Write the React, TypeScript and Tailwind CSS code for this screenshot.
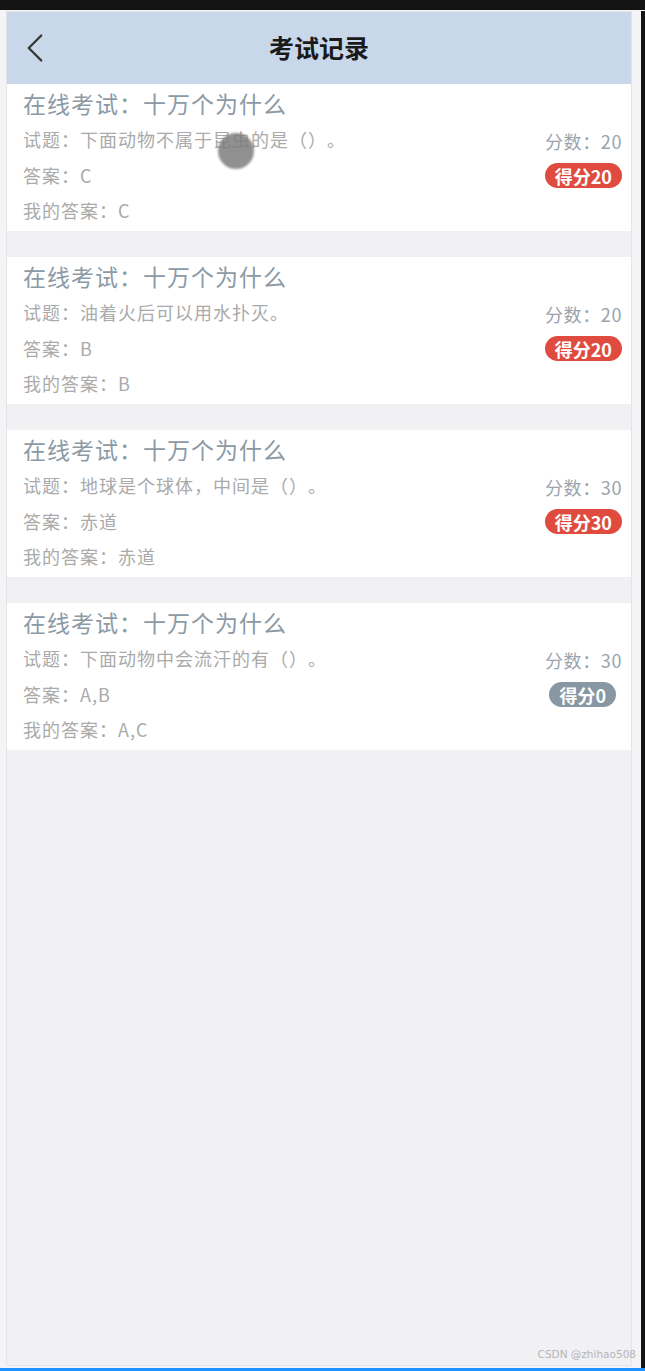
import { ChevronLeft } from 'lucide-react';

type Record = {
  question: string;
  answer: string;
  myAnswer: string;
  score: number;
  got: number;
};

const records: Record[] = [
  { question: '下面动物不属于昆虫的是（）。', answer: 'C', myAnswer: 'C', score: 20, got: 20 },
  { question: '油着火后可以用水扑灭。', answer: 'B', myAnswer: 'B', score: 20, got: 20 },
  { question: '地球是个球体，中间是（）。', answer: '赤道', myAnswer: '赤道', score: 30, got: 30 },
  { question: '下面动物中会流汗的有（）。', answer: 'A,B', myAnswer: 'A,C', score: 30, got: 0 },
];

const font = { fontFamily: '"Noto Sans CJK SC", "Noto Sans", sans-serif' };

function RecordCard({ item }: { item: Record }) {
  const badge = item.got > 0 ? 'bg-[#e04b40] px-[10px]' : 'bg-[#8797a3] px-[10px] mr-[6px]';
  return (
    <div className="bg-white h-[147px] pl-[16px] pr-[9px] pt-[4px] flex flex-col [text-spacing-trim:space-all]">
      <div className="text-[23px] leading-[30px] text-[#8c9aa6] tracking-[1px]">
        在线考试：十万个为什么
      </div>
      <div className="flex justify-between">
        <div className="flex flex-col text-[18px] text-[#aaaaaa] tracking-[1px]">
          <div className="h-[35px] leading-[35px] mt-[4px]">试题：{item.question}</div>
          <div className="h-[36px] leading-[36px]">答案：{item.answer}</div>
          <div className="h-[35px] leading-[35px]">我的答案：{item.myAnswer}</div>
        </div>
        <div className="flex flex-col items-end pt-[11px]">
          <div className="text-[18px] leading-[24px] text-[#9aa4ad] tracking-[0.6px]">分数：{item.score}</div>
          <div className={`mt-[10px] h-[25px] rounded-full flex items-center text-white font-bold text-[18px] leading-none ${badge}`}>
            得分{item.got}
          </div>
        </div>
      </div>
    </div>
  );
}

export default function App() {
  return (
    <div className="w-[645px] h-[1371px] bg-[#f4f4f6] flex flex-col overflow-hidden" style={font}>
      <div className="h-[10px] bg-[#141414] shrink-0" />
      <div className="flex flex-1 pt-[1px]">
        <div className="w-[6px] shrink-0" />
        <div className="w-[626px] border border-[#e4e4e6] bg-[#f1f0f3] flex flex-col relative mb-[2px]">
          <div className="h-[72px] bg-[#c8d8ea] flex items-center relative shrink-0">
            <ChevronLeft className="ml-[3px] text-[#333]" size={50} strokeWidth={1.1} />
            <div className="absolute inset-0 flex items-center justify-center text-[25px] font-bold text-[#1a1a1a]">
              考试记录
            </div>
          </div>
          <div className="flex flex-col gap-[26px]">
            {records.map((r, i) => (
              <RecordCard key={i} item={r} />
            ))}
          </div>
          <div className="absolute left-[211px] top-[121px] w-[36px] h-[36px] rounded-full bg-[#7d7d7d] opacity-85 blur-[1px]" />
          <div className="absolute right-[-5px] bottom-[2px] text-[10.5px] text-[#b5b5b5]" style={{ fontFamily: '"DejaVu Sans", sans-serif' }}>
            CSDN @zhihao508
          </div>
        </div>
        <div className="w-[9px] shrink-0" />
        <div className="flex-1 bg-[#141414]" />
      </div>
      <div className="h-[3px] bg-[#1e90ff] shrink-0" />
    </div>
  );
}
